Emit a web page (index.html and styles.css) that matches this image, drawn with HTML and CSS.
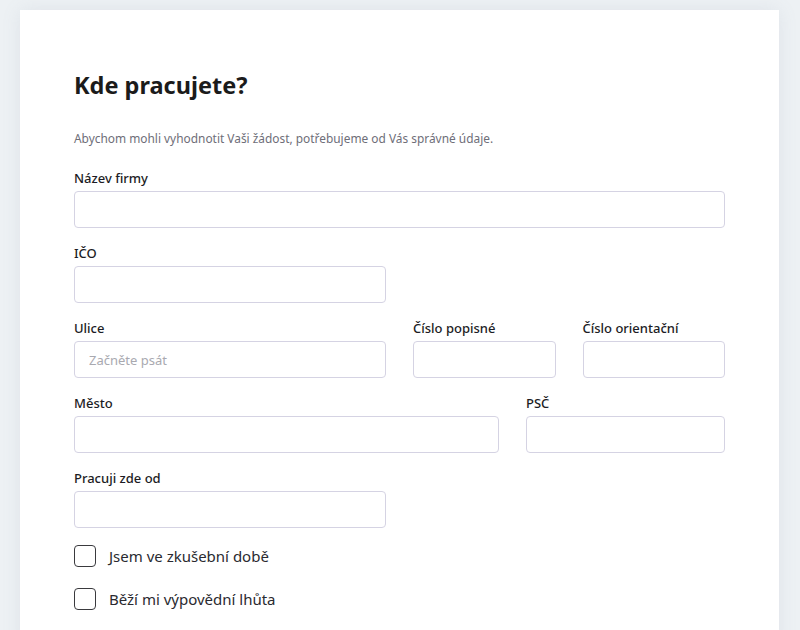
FILE: index.html
```html
<!DOCTYPE html>
<html lang="cs">
<head>
<meta charset="utf-8">
<title>Kde pracujete?</title>
<link rel="stylesheet" href="styles.css">
</head>
<body>
<main class="card">
  <h1 class="title">Kde pracujete?</h1>
  <p class="subtitle">Abychom mohli vyhodnotit Vaši žádost, potřebujeme od Vás správné údaje.</p>
  <form class="form">
    <div class="field span-12">
      <label class="label">Název firmy</label>
      <input class="input" type="text">
    </div>
    <div class="field span-6">
      <label class="label">IČO</label>
      <input class="input" type="text">
    </div>
    <div class="field row-start-6">
      <label class="label">Ulice</label>
      <input class="input" type="text" placeholder="Začněte psát">
    </div>
    <div class="field span-3">
      <label class="label">Číslo popisné</label>
      <input class="input" type="text">
    </div>
    <div class="field span-3">
      <label class="label">Číslo orientační</label>
      <input class="input" type="text">
    </div>
    <div class="field span-8">
      <label class="label">Město</label>
      <input class="input" type="text">
    </div>
    <div class="field span-4">
      <label class="label">PSČ</label>
      <input class="input" type="text">
    </div>
    <div class="field span-6">
      <label class="label">Pracuji zde od</label>
      <input class="input" type="text">
    </div>
  </form>
  <div class="checks">
    <label class="check"><span class="box"></span><span class="check-text">Jsem ve zkušební době</span></label>
    <label class="check"><span class="box"></span><span class="check-text">Běží mi výpovědní lhůta</span></label>
  </div>
</main>
</body>
</html>
```

FILE: styles.css
```css
* { box-sizing: border-box; }
html, body { margin: 0; padding: 0; }
body {
  background: #edf1f4;
  font-family: "Noto Sans", "Open Sans", "DejaVu Sans", sans-serif;
  color: #1d1d1f;
  padding: 10px 21px 0 20px;
  height: 630px;
  overflow: hidden;
}
.card {
  background: #ffffff;
  box-shadow: 0 0 18px rgba(120, 135, 160, 0.12);
  padding: 58px 54px 40px 54px;
  min-height: 640px;
}
.title {
  margin: 0;
  font-size: 23.5px;
  line-height: 34px;
  font-weight: 700;
  color: #1b1b1b;
}
.subtitle {
  margin: 26px 0 0;
  font-size: 11.9px;
  line-height: 20px;
  color: #6e6e78;
}
.form {
  margin-top: 21px;
  display: grid;
  grid-template-columns: repeat(12, minmax(0, 1fr));
  column-gap: 27px;
  row-gap: 16px;
}
.field { display: flex; flex-direction: column; min-width: 0; }
.span-12 { grid-column: span 12; }
.span-8 { grid-column: span 8; }
.span-6 { grid-column: span 6; }
.span-4 { grid-column: span 4; }
.span-3 { grid-column: span 3; }
.row-start-6 { grid-column: 1 / span 6; }
.label {
  font-size: 13px;
  line-height: 18px;
  font-weight: 500;
  color: #1c1c24;
  margin-bottom: 4px;
  white-space: nowrap;
}
.input {
  width: 100%;
  height: 37px;
  border: 1px solid #d5d3e3;
  border-radius: 4px;
  padding: 0 14px;
  font-family: inherit;
  font-size: 13px;
  color: #222;
  background: #fff;
  outline: none;
}
.input::placeholder { color: #a9a9b0; }
.checks {
  margin-top: 17px;
  display: flex;
  flex-direction: column;
  gap: 21px;
}
.check {
  display: flex;
  align-items: center;
  gap: 13px;
  font-size: 15px;
  color: #2a2a30;
}
.box {
  width: 22px;
  height: 22px;
  border: 1.5px solid #3a3a3e;
  border-radius: 4px;
  flex: none;
}
```
